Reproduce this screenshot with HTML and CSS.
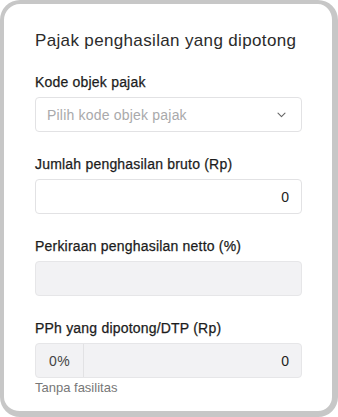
FILE: index.html
```html
<!DOCTYPE html>
<html lang="id">
<head>
<meta charset="utf-8">
<title>Pajak penghasilan</title>
<link rel="stylesheet" href="styles.css">
</head>
<body>
<div class="frame">
  <h2 class="title">Pajak penghasilan yang dipotong</h2>

  <div class="field">
    <label class="label">Kode objek pajak</label>
    <div class="input select">
      <span class="placeholder">Pilih kode objek pajak</span>
      <svg class="chev" width="9" height="6" viewBox="0 0 9 6"><path d="M1 1.2l3.5 3.5 3.5-3.5" fill="none" stroke="#666" stroke-width="1.1" stroke-linecap="round" stroke-linejoin="round"/></svg>
    </div>
  </div>

  <div class="field">
    <label class="label">Jumlah penghasilan bruto (Rp)</label>
    <div class="input num">0</div>
  </div>

  <div class="field">
    <label class="label">Perkiraan penghasilan netto (%)</label>
    <div class="input disabled"></div>
  </div>

  <div class="field last">
    <label class="label">PPh yang dipotong/DTP (Rp)</label>
    <div class="input disabled group">
      <span class="prefix">0%</span>
      <span class="value">0</span>
    </div>
    <div class="help">Tanpa fasilitas</div>
  </div>
</div>
</body>
</html>
```

FILE: styles.css
```css
html, body {
  margin: 0;
  padding: 0;
  background: #ffffff;
}
body {
  font-family: "Liberation Sans", Arial, Helvetica, sans-serif;
  color: #222;
}
.frame {
  box-sizing: border-box;
  width: 338px;
  height: 417px;
  border-style: solid;
  border-color: #c7c7c7;
  border-width: 4px 6px 6px 4px;
  border-radius: 20px;
  padding: 27px 30px 0 31px;
  background: #fff;
}
.title {
  margin: 0 0 22px;
  font-size: 17px;
  line-height: 20px;
  font-weight: 400;
  color: #2b2b2b;
  letter-spacing: 0.35px;
}
.field {
  display: flex;
  flex-direction: column;
  margin-bottom: 23px;
}
.field.last { margin-bottom: 0; }
.label {
  font-size: 14px;
  line-height: 18px;
  font-weight: 400;
  color: #1c1c1c;
  margin-bottom: 6px;
  letter-spacing: 0.2px;
  -webkit-text-stroke: 0.25px #1c1c1c;
}
.input {
  box-sizing: border-box;
  height: 35px;
  border: 1px solid #e2e2e4;
  border-radius: 4px;
  background: #fff;
  font-size: 14px;
  display: flex;
  align-items: center;
}
.select {
  padding: 0 15px 0 11px;
  justify-content: space-between;
}
.placeholder {
  color: #a9a9ab;
  letter-spacing: 0.2px;
}
.num {
  justify-content: flex-end;
  padding-right: 12px;
  color: #222;
}
.disabled {
  background: #f2f2f4;
  border-color: #e6e6e8;
}
.group { padding: 0; }
.prefix {
  box-sizing: border-box;
  width: 48px;
  height: 100%;
  display: flex;
  align-items: center;
  justify-content: center;
  border-right: 1px solid #e2e2e4;
  color: #444;
  letter-spacing: 0.5px;
}
.value {
  flex: 1;
  text-align: right;
  padding-right: 12px;
  color: #222;
}
.help {
  margin-top: 2px;
  font-size: 13px;
  line-height: 16px;
  color: #777;
}
```
